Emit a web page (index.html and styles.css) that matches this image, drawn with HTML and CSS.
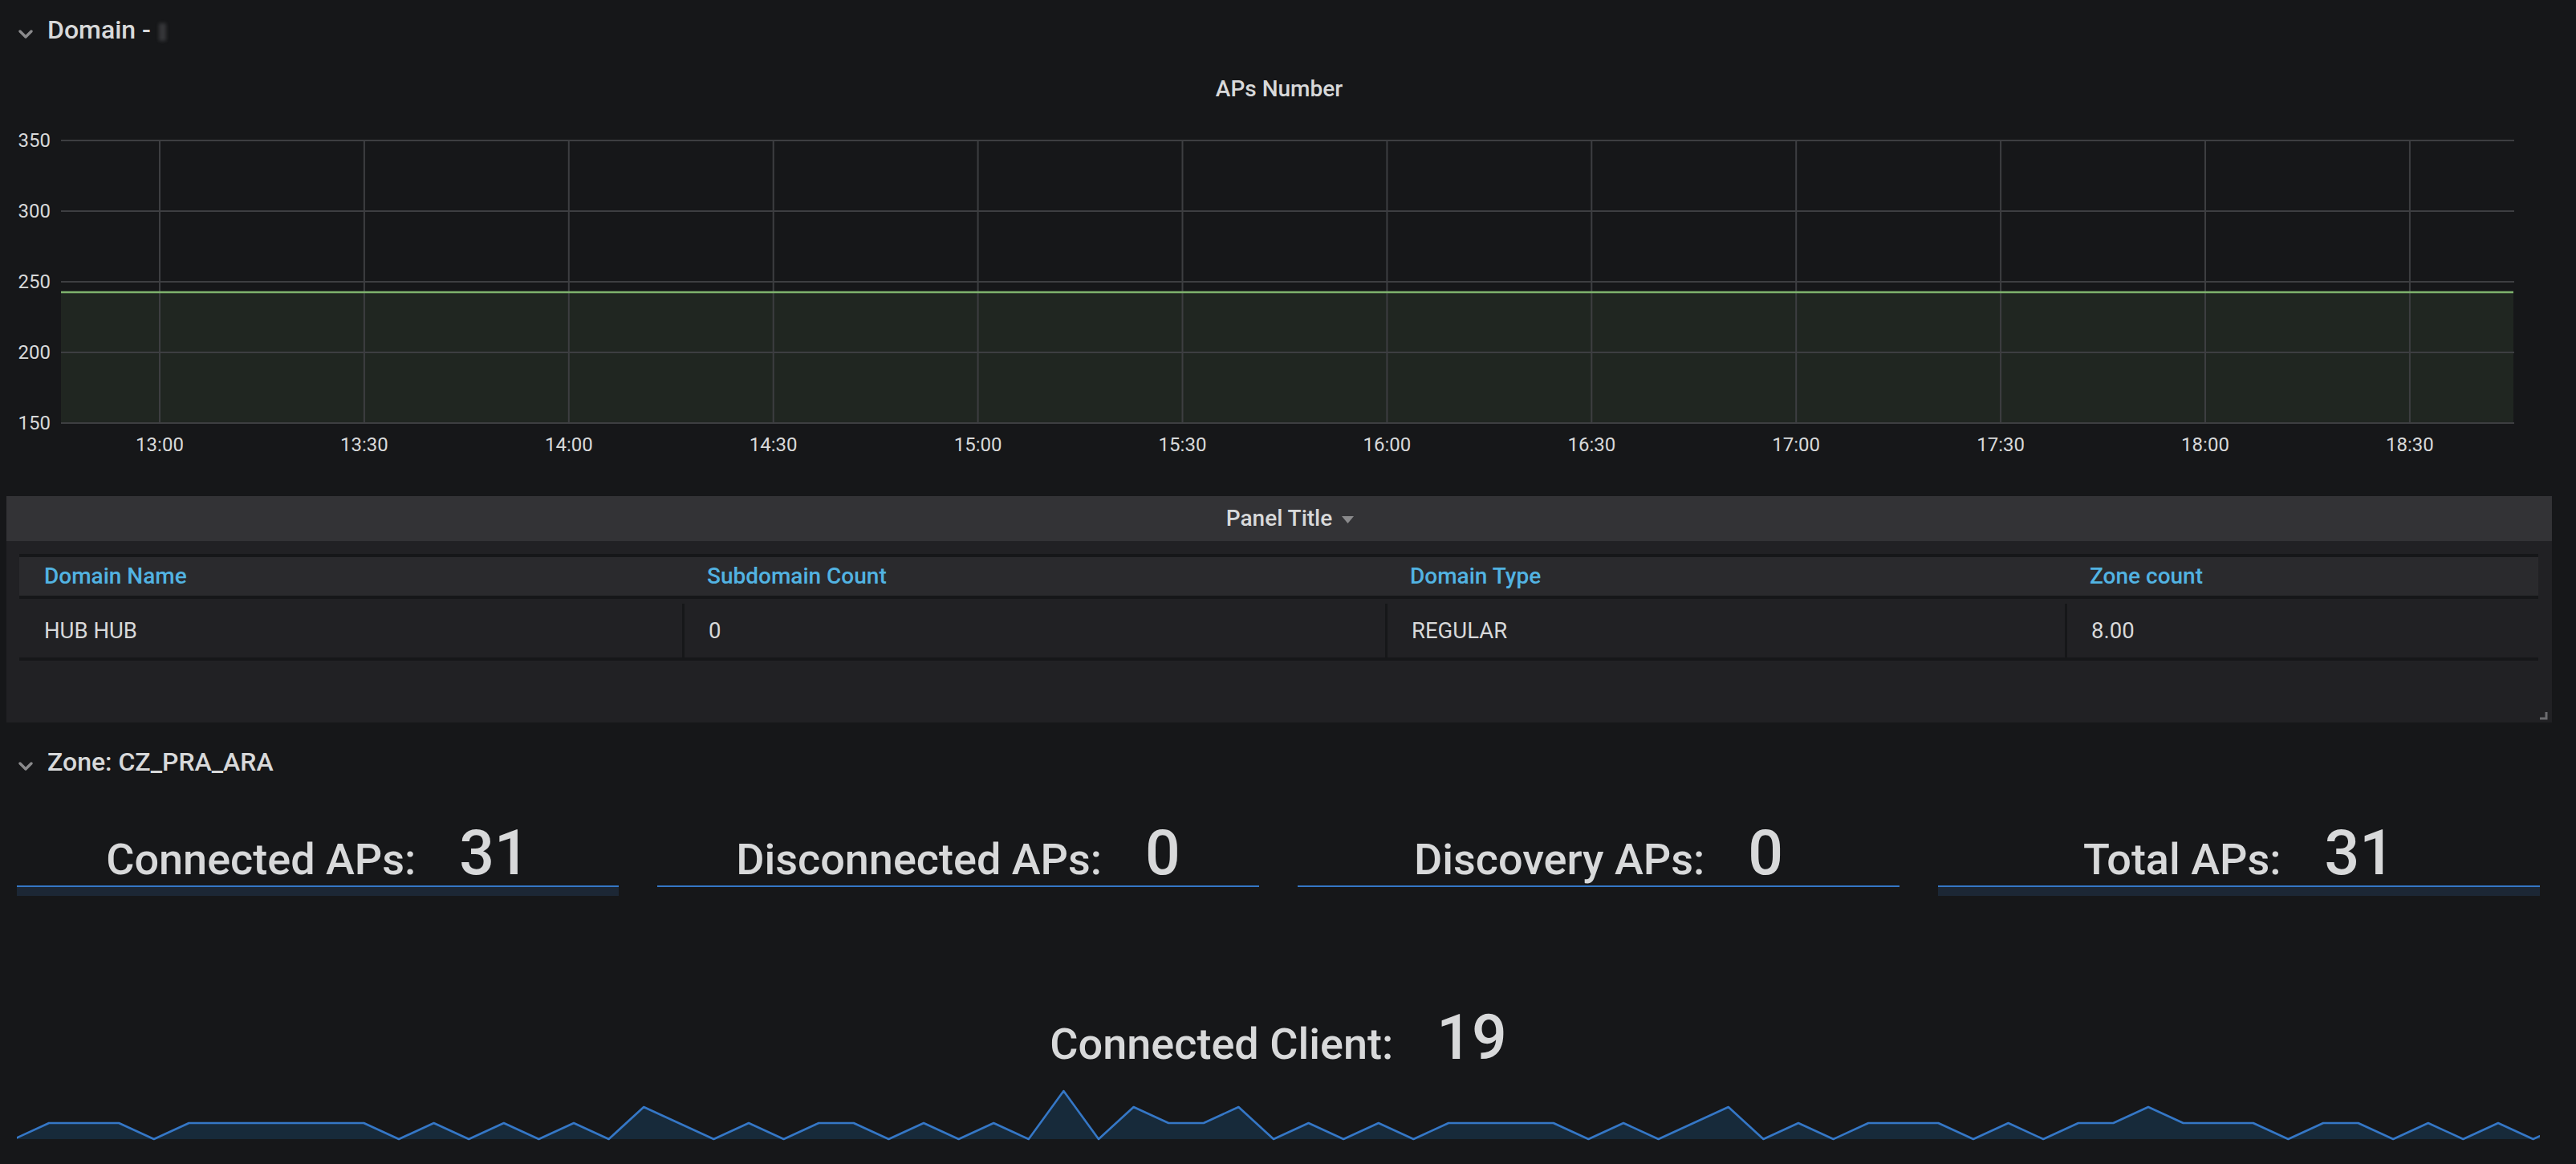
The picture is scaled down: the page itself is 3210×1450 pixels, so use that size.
FILE: index.html
```html
<!DOCTYPE html>
<html>
<head>
<meta charset="utf-8">
<link rel="stylesheet" href="styles.css">
</head>
<body>
<div class="dash">
  <div class="row-header">
    <svg class="chev" width="18" height="11" viewBox="0 0 18 11"><polyline points="2,2 9,9 16,2" fill="none" stroke="#8a8a8c" stroke-width="3.4" stroke-linecap="round" stroke-linejoin="round"/></svg>
    <span class="row-title">Domain - <span class="redact"></span></span>
  </div>

  <div class="graph-panel">
    <div class="graph-title">APs Number</div>
    <svg class="graph" width="3172" height="450" viewBox="0 0 3172 450">
      <rect x="68" y="224" width="3056" height="163" fill="rgba(126,178,109,0.1)"/>
      <g stroke="#3d3e41" stroke-width="2">
        <line x1="68" y1="35" x2="3125" y2="35"/>
        <line x1="68" y1="123" x2="3125" y2="123"/>
        <line x1="68" y1="211" x2="3125" y2="211"/>
        <line x1="68" y1="299" x2="3125" y2="299"/>
        <line x1="68" y1="387" x2="3125" y2="387"/>
        <line x1="191" y1="35" x2="191" y2="387"/>
        <line x1="445.9" y1="35" x2="445.9" y2="387"/>
        <line x1="700.8" y1="35" x2="700.8" y2="387"/>
        <line x1="955.7" y1="35" x2="955.7" y2="387"/>
        <line x1="1210.6" y1="35" x2="1210.6" y2="387"/>
        <line x1="1465.5" y1="35" x2="1465.5" y2="387"/>
        <line x1="1720.4" y1="35" x2="1720.4" y2="387"/>
        <line x1="1975.3" y1="35" x2="1975.3" y2="387"/>
        <line x1="2230.2" y1="35" x2="2230.2" y2="387"/>
        <line x1="2485.1" y1="35" x2="2485.1" y2="387"/>
        <line x1="2740" y1="35" x2="2740" y2="387"/>
        <line x1="2994.9" y1="35" x2="2994.9" y2="387"/>
      </g>
      <line x1="68" y1="224" x2="3124" y2="224" stroke="#7eb26d" stroke-width="2.4"/>
      <g class="ylab" text-anchor="end">
        <text x="55" y="42.6">350</text>
        <text x="55" y="130.6">300</text>
        <text x="55" y="218.6">250</text>
        <text x="55" y="306.6">200</text>
        <text x="55" y="394.6">150</text>
      </g>
      <g class="xlab" text-anchor="middle">
        <text x="191" y="422">13:00</text>
        <text x="445.9" y="422">13:30</text>
        <text x="700.8" y="422">14:00</text>
        <text x="955.7" y="422">14:30</text>
        <text x="1210.6" y="422">15:00</text>
        <text x="1465.5" y="422">15:30</text>
        <text x="1720.4" y="422">16:00</text>
        <text x="1975.3" y="422">16:30</text>
        <text x="2230.2" y="422">17:00</text>
        <text x="2485.1" y="422">17:30</text>
        <text x="2740" y="422">18:00</text>
        <text x="2994.9" y="422">18:30</text>
      </g>
    </svg>
  </div>

  <div class="table-panel">
    <div class="panel-header">
      <span>Panel Title</span>
      <svg class="caret" width="15" height="9" viewBox="0 0 15 9"><polygon points="0,0 15,0 7.5,9" fill="#8a8a8c"/></svg>
    </div>
    <div class="panel-body">
      <div class="table">
        <div class="thead">
          <div class="th">Domain Name</div>
          <div class="th">Subdomain Count</div>
          <div class="th">Domain Type</div>
          <div class="th">Zone count</div>
        </div>
        <div class="trow">
          <div class="td first">HUB HUB</div>
          <div class="td">0</div>
          <div class="td">REGULAR</div>
          <div class="td">8.00</div>
        </div>
      </div>
    </div>
    <svg class="resize" width="10" height="10" viewBox="0 0 10 10"><path d="M8 0 V8 H0" fill="none" stroke="#6b6b6e" stroke-width="3"/></svg>
  </div>

  <div class="row-header zone">
    <svg class="chev" width="18" height="11" viewBox="0 0 18 11"><polyline points="2,2 9,9 16,2" fill="none" stroke="#8a8a8c" stroke-width="3.4" stroke-linecap="round" stroke-linejoin="round"/></svg>
    <span class="row-title">Zone: CZ_PRA_ARA</span>
  </div>

  <div class="stat-row">
    <div class="stat">
      <div class="stat-text"><span class="label">Connected APs:</span><span class="value">31</span></div>
      <div class="bar filled"></div>
    </div>
    <div class="stat">
      <div class="stat-text"><span class="label">Disconnected APs:</span><span class="value">0</span></div>
      <div class="bar"></div>
    </div>
    <div class="stat">
      <div class="stat-text"><span class="label">Discovery APs:</span><span class="value">0</span></div>
      <div class="bar"></div>
    </div>
    <div class="stat">
      <div class="stat-text"><span class="label">Total APs:</span><span class="value">31</span></div>
      <div class="bar filled"></div>
    </div>
  </div>

  <div class="client">
    <div class="stat-text"><span class="label">Connected Client:</span><span class="value">19</span></div>
    <svg class="spark" width="3144" height="90" viewBox="0 0 3144 90">
      <polygon fill="rgba(31,118,189,0.2)" points="-3.6,88 40,68 83.6,68 127.2,68 170.8,88 214.4,68 258,68 301.6,68 345.2,68 388.8,68 432.4,68 476,88 519.6,68 563.2,88 606.8,68 650.4,88 694,68 737.6,88 781.2,48 824.8,68 868.4,88 912,68 955.6,88 999.2,68 1042.8,68 1086.4,88 1130,68 1173.6,88 1217.2,68 1260.8,88 1304.4,28 1348,88 1391.6,48 1435.2,68 1478.8,68 1522.4,48 1566,88 1609.6,68 1653.2,88 1696.8,68 1740.4,88 1784,68 1827.6,68 1871.2,68 1914.8,68 1958.4,88 2002,68 2045.6,88 2089.2,68 2132.8,48 2176.4,88 2220,68 2263.6,88 2307.2,68 2350.8,68 2394.4,68 2438,88 2481.6,68 2525.2,88 2568.8,68 2612.4,68 2656,48 2699.6,68 2743.2,68 2786.8,68 2830.4,88 2874,68 2917.6,68 2961.2,88 3004.8,68 3048.4,88 3092,68 3135.6,88 3179.2,68 3179.2,88"/>
      <polyline fill="none" stroke="#3577c6" stroke-width="2.6" stroke-linejoin="round" points="-3.6,88 40,68 83.6,68 127.2,68 170.8,88 214.4,68 258,68 301.6,68 345.2,68 388.8,68 432.4,68 476,88 519.6,68 563.2,88 606.8,68 650.4,88 694,68 737.6,88 781.2,48 824.8,68 868.4,88 912,68 955.6,88 999.2,68 1042.8,68 1086.4,88 1130,68 1173.6,88 1217.2,68 1260.8,88 1304.4,28 1348,88 1391.6,48 1435.2,68 1478.8,68 1522.4,48 1566,88 1609.6,68 1653.2,88 1696.8,68 1740.4,88 1784,68 1827.6,68 1871.2,68 1914.8,68 1958.4,88 2002,68 2045.6,88 2089.2,68 2132.8,48 2176.4,88 2220,68 2263.6,88 2307.2,68 2350.8,68 2394.4,68 2438,88 2481.6,68 2525.2,88 2568.8,68 2612.4,68 2656,48 2699.6,68 2743.2,68 2786.8,68 2830.4,88 2874,68 2917.6,68 2961.2,88 3004.8,68 3048.4,88 3092,68 3135.6,88 3179.2,68"/>
    </svg>
  </div>
</div>
</body>
</html>
```

FILE: styles.css
```css
html, body {
  margin: 0;
  padding: 0;
  overflow: hidden;
}
body {
  background: #161719;
  color: #d8d9da;
  font-family: Roboto, "Liberation Sans", Arial, sans-serif;
  width: 3210px;
  height: 1450px;
}
.dash {
  width: 3210px;
  height: 1450px;
  overflow: hidden;
}
.row-header {
  display: flex;
  align-items: flex-start;
  gap: 18px;
  padding: 21px 0 0 23px;
  height: 32px;
  font-size: 32px;
  line-height: 32px;
  font-weight: 500;
  color: #d8d9da;
}
.row-header .chev {
  margin-top: 16px;
  flex: none;
}
.redact {
  display: inline-block;
  width: 9px;
  height: 22px;
  margin-left: 2px;
  vertical-align: -3px;
  background: rgba(200, 200, 205, 0.18);
  filter: blur(2px);
}
.graph-panel {
  margin: 27px 0 0 8px;
  width: 3172px;
  height: 538px;
}
.graph-title {
  padding-top: 17px;
  height: 28px;
  font-size: 28px;
  line-height: 28px;
  font-weight: 500;
  text-align: center;
}
.graph {
  display: block;
  margin-top: 15px;
}
.ylab text, .xlab text {
  fill: #d8d9da;
  font-size: 24px;
  font-family: Roboto, "Liberation Sans", Arial, sans-serif;
}
.table-panel {
  position: relative;
  margin-left: 8px;
  width: 3172px;
  height: 282px;
  background: #212124;
}
.panel-header {
  height: 56px;
  background: #333336;
  display: flex;
  align-items: center;
  justify-content: center;
  gap: 12px;
  font-size: 28px;
  line-height: 28px;
  font-weight: 500;
  color: #d8d9da;
}
.panel-header .caret {
  margin-top: 2px;
  margin-right: -27px;
}
.panel-body {
  padding: 16px 17px 0 16px;
}
.table {
  border-top: 4px solid #161719;
}
.thead, .trow {
  display: grid;
  grid-template-columns: 826px 876px 847px 590px;
}
.thead {
  height: 48px;
  background: #2a2a2d;
  border-bottom: 4px solid #161719;
}
.th {
  padding-left: 31px;
  font-size: 28px;
  line-height: 48px;
  font-weight: 500;
  color: #52b3e2;
  white-space: nowrap;
}
.trow {
  padding-top: 6px;
  border-bottom: 4px solid #161719;
}
.td {
  height: 67px;
  line-height: 67px;
  font-size: 27.5px;
  color: #d8d9da;
  border-left: 3px solid #161719;
  padding-left: 30px;
  white-space: nowrap;
}
.td.first {
  border-left: none;
  padding-left: 31px;
}
.resize {
  position: absolute;
  right: 5px;
  bottom: 3px;
}
.row-header.zone {
  padding-top: 33px;
}
.stat-row {
  display: grid;
  grid-template-columns: repeat(4, 750px);
  column-gap: 48px;
  margin: 60px 0 0 21px;
  align-items: start;
}
.stat-text {
  display: flex;
  align-items: baseline;
  justify-content: center;
  gap: 54px;
  height: 76px;
  white-space: nowrap;
}
.label {
  font-size: 54px;
  line-height: 54px;
  font-weight: 500;
  color: #d8d9da;
}
.value {
  font-size: 77px;
  line-height: 76px;
  font-weight: 500;
  color: #d8d9da;
}
.bar {
  margin-top: 2px;
  border-top: 2px solid #3577c6;
  height: 0;
}
.bar.filled {
  height: 11px;
  background: #1c2735;
}
.client {
  margin: 139px 0 0 21px;
  width: 3144px;
}
.client .stat-text {
  justify-content: center;
}
.spark {
  display: block;
}
```
